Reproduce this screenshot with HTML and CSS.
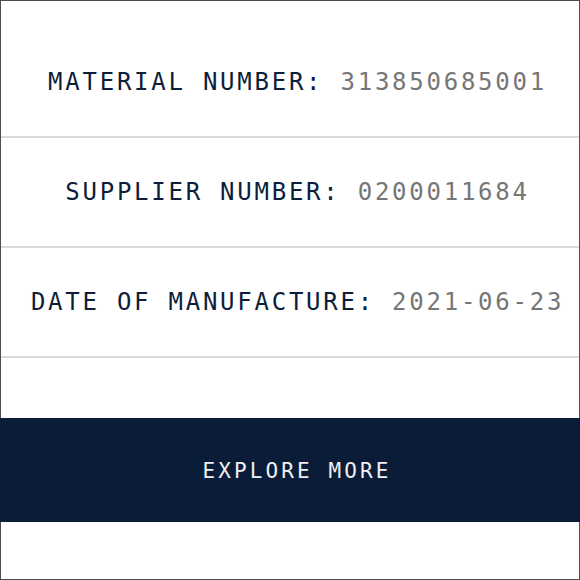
FILE: index.html
```html
<!DOCTYPE html>
<html lang="en">
<head>
  <meta charset="UTF-8" />
  <title>Product Details</title>
  <link rel="stylesheet" href="styles.css">
</head>
<body>
  <div class="panel">
    <div class="spec-row">
      <span class="label">MATERIAL NUMBER:</span>&nbsp;<span class="value">313850685001</span>
    </div>
    <div class="spec-row">
      <span class="label">SUPPLIER NUMBER:</span>&nbsp;<span class="value">0200011684</span>
    </div>
    <div class="spec-row">
      <span class="label">DATE OF MANUFACTURE:</span>&nbsp;<span class="value">2021-06-23</span>
    </div>

    <a class="explore-btn" href="#">EXPLORE MORE</a>
  </div>
</body>
</html>
```

FILE: styles.css
```css
* {
  box-sizing: border-box;
}

body {
  margin: 0;
  background: #ffffff;
  font-family: "DejaVu Sans Mono", "Liberation Mono", monospace;
}

.panel {
  width: 580px;
  height: 580px;
  border: 1px solid #4d4d4d;
  padding-top: 27px;
  display: flex;
  flex-direction: column;
}

.spec-row {
  height: 110px;
  border-bottom: 2px solid #d9d9d9;
  display: flex;
  align-items: center;
  justify-content: center;
  padding-left: 15px;
  font-size: 24px;
  letter-spacing: 2.75px;
  white-space: nowrap;
}

.label {
  color: #0d1e3a;
}

.value {
  color: #767676;
}

.explore-btn {
  margin: 60px -1px 0;
  height: 104px;
  padding: 2px 0 0 14px;
  background: #0a1c37;
  color: #eef0f4;
  text-decoration: none;
  display: flex;
  align-items: center;
  justify-content: center;
  font-size: 21px;
  letter-spacing: 3.1px;
}
```
